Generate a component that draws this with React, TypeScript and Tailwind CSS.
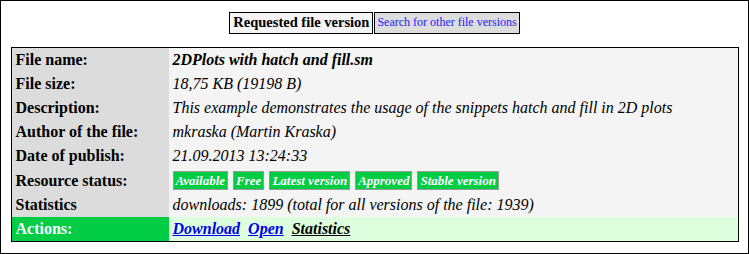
import React from "react";

const rows: { label: string; value: React.ReactNode; bold?: boolean }[] = [
  { label: "File name:", value: <span className="font-bold">2DPlots with hatch and fill.sm</span> },
  { label: "File size:", value: "18,75 KB (19198 B)" },
  { label: "Description:", value: "This example demonstrates the usage of the snippets hatch and fill in 2D plots" },
  { label: "Author of the file:", value: "mkraska (Martin Kraska)" },
  { label: "Date of publish:", value: "21.09.2013 13:24:33" },
];

const badges = ["Available", "Free", "Latest version", "Approved", "Stable version"];

export default function App() {
  return (
    <div
      className="w-[749px] h-[254px] border border-black bg-white flex flex-col items-center"
      style={{ fontFamily: '"Liberation Serif", "Times New Roman", serif' }}
    >
      <div className="flex mt-[11px] gap-[1px] h-[22px]">
        <div className="border border-black bg-[#f4f4f4] px-[3px] text-[14.5px] font-bold leading-[19px] text-black">
          Requested file version
        </div>
        <div className="border border-black bg-[#dddddd] px-[2px] text-[12px] leading-[19px] text-[#2222ff]">
          Search for other file versions
        </div>
      </div>
      <div className="mt-[13px] w-[728px] border border-black text-[16px] leading-[20px] text-black">
        {rows.map((r) => (
          <div key={r.label} className="flex h-[24px]">
            <div className="w-[157px] bg-[#dcdcdc] font-bold pl-[4px] flex items-center">{r.label}</div>
            <div className="flex-1 bg-[#f4f4f4] italic pl-[4px] flex items-center">{r.value}</div>
          </div>
        ))}
        <div className="flex h-[25px]">
          <div className="w-[157px] bg-[#dcdcdc] font-bold pl-[4px] flex items-center">Resource status:</div>
          <div className="flex-1 bg-[#f4f4f4] pl-[4px] flex items-center gap-[5px]">
            {badges.map((b) => (
              <span
                key={b}
                className="border border-[#999999] bg-[#00cc44] text-white font-bold italic text-[13px] leading-[17px] px-[2px]"
              >
                {b}
              </span>
            ))}
          </div>
        </div>
        <div className="flex h-[24px]">
          <div className="w-[157px] bg-[#dcdcdc] font-bold pl-[4px] flex items-center">Statistics</div>
          <div className="flex-1 bg-[#f4f4f4] italic pl-[4px] flex items-center">
            downloads: 1899 (total for all versions of the file: 1939)
          </div>
        </div>
        <div className="flex h-[24px]">
          <div className="w-[157px] bg-[#00cc44] text-white font-bold pl-[4px] flex items-center">Actions:</div>
          <div className="flex-1 bg-[#ddffdd] pl-[4px] flex items-center gap-[8px] font-bold italic">
            <a className="underline text-[#0000ee]">Download</a>
            <a className="underline text-[#0000ee]">Open</a>
            <a className="underline text-black">Statistics</a>
          </div>
        </div>
      </div>
    </div>
  );
}
